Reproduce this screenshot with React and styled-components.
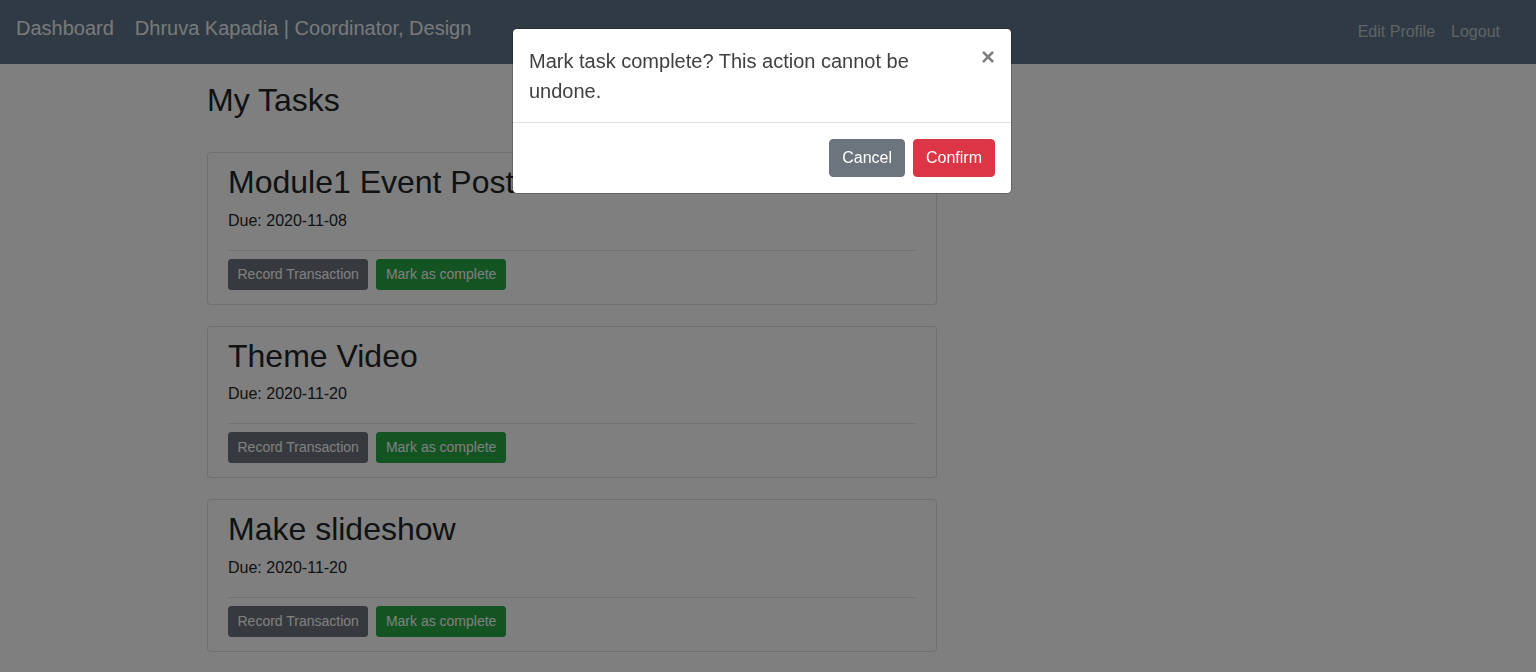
import React from 'react'
import styled, { createGlobalStyle } from 'styled-components'

const tasks = [
	{ id: 1, title: 'Module1 Event Poster', due: '2020-11-08' },
	{ id: 2, title: 'Theme Video', due: '2020-11-20' },
	{ id: 3, title: 'Make slideshow', due: '2020-11-20' },
]

const App = () => (
	<>
		<GlobalStyle />
		<Navbar>
			<Brand>Dashboard</Brand>
			<Brand>Dhruva Kapadia | Coordinator, Design</Brand>
			<NavLinks>
				<NavLink>Edit Profile</NavLink>
				<NavLink>Logout</NavLink>
			</NavLinks>
		</Navbar>
		<Main>
			<PageTitle>My Tasks</PageTitle>
			<TaskList>
				{tasks.map((task) => (
					<Card key={task.id}>
						<CardTitle>{task.title}</CardTitle>
						<Due>Due: {task.due}</Due>
						<Divider />
						<Actions>
							<SmallButton variant="secondary">Record Transaction</SmallButton>
							<SmallButton variant="success">Mark as complete</SmallButton>
						</Actions>
					</Card>
				))}
			</TaskList>
		</Main>
		<Backdrop />
		<Dialog>
			<DialogHeader>
				<DialogTitle>Mark task complete? This action cannot be undone.</DialogTitle>
				<Close aria-label="Close">×</Close>
			</DialogHeader>
			<DialogFooter>
				<Button variant="secondary">Cancel</Button>
				<Button variant="danger">Confirm</Button>
			</DialogFooter>
		</Dialog>
	</>
)

export default App

const colors = {
	secondary: '#6c757d',
	success: '#28a745',
	danger: '#dc3545',
}

const GlobalStyle = createGlobalStyle`
	* {
		box-sizing: border-box;
	}
	body {
		margin: 0;
		background: #fff;
		color: #212529;
		font-family: 'Liberation Sans', Arial, sans-serif;
		font-size: 16px;
		line-height: 1.5;
		overflow: hidden;
	}
`

const Navbar = styled.nav`
	display: flex;
	align-items: flex-start;
	gap: 21px;
	height: 64px;
	padding: 13px 36px 0 16px;
	background: #5f7588;
`

const Brand = styled.span`
	font-size: 20px;
	line-height: 30px;
	color: #f0f3f6;
`

const NavLinks = styled.div`
	display: flex;
	gap: 16px;
	margin-left: auto;
	padding-top: 7px;
`

const NavLink = styled.a`
	color: rgba(255, 255, 255, 0.6);
	font-size: 16px;
	line-height: 24px;
	cursor: pointer;
`

const Main = styled.main`
	width: 730px;
	margin-left: 207px;
	padding-top: 17px;
`

const PageTitle = styled.h2`
	margin: 0 0 33px;
	font-size: 32px;
	font-weight: 500;
	line-height: 1.2;
`

const TaskList = styled.div`
	display: flex;
	flex-direction: column;
	gap: 21px;
`

const Card = styled.div`
	border: 1px solid rgba(0, 0, 0, 0.125);
	border-radius: 4px;
	padding: 10px 20px 14px;
	background: #fff;
`

const CardTitle = styled.h2`
	margin: 0 0 7px;
	font-size: 32px;
	font-weight: 500;
	line-height: 1.2;
	white-space: nowrap;
`

const Due = styled.p`
	margin: 0 0 17px;
`

const Divider = styled.hr`
	margin: 0 0 8px;
	border: 0;
	border-top: 1px solid rgba(0, 0, 0, 0.1);
`

const Actions = styled.div`
	display: flex;
	gap: 8px;
`

const SmallButton = styled.button`
	padding: 4px 8.5px;
	border: 1px solid ${(p) => colors[p.variant]};
	border-radius: 3px;
	background: ${(p) => colors[p.variant]};
	color: #fff;
	font-family: inherit;
	font-size: 14px;
	line-height: 21px;
`

const Backdrop = styled.div`
	position: fixed;
	inset: 0;
	background: rgba(0, 0, 0, 0.5);
`

const Dialog = styled.div`
	position: fixed;
	top: 28px;
	left: 512px;
	width: 500px;
	border: 1px solid rgba(0, 0, 0, 0.2);
	border-radius: 5px;
	background: #fff;
	background-clip: padding-box;
`

const DialogHeader = styled.div`
	display: flex;
	align-items: flex-start;
	padding: 17px 16px 16px;
	border-bottom: 1px solid #dee2e6;
`

const DialogTitle = styled.h5`
	max-width: 420px;
	margin: 0;
	font-size: 20px;
	font-weight: 500;
	line-height: 1.5;
	color: #404040;
`

const Close = styled.button`
	margin: -17px -16px -16px auto;
	padding: 16px;
	border: 0;
	background: transparent;
	font-family: inherit;
	font-size: 24px;
	font-weight: 700;
	line-height: 1;
	color: #000;
	opacity: 0.5;
`

const DialogFooter = styled.div`
	display: flex;
	justify-content: flex-end;
	gap: 8px;
	padding: 16px;
`

const Button = styled.button`
	padding: 6px 12px;
	border: 1px solid ${(p) => colors[p.variant]};
	border-radius: 4px;
	background: ${(p) => colors[p.variant]};
	color: #fff;
	font-family: inherit;
	font-size: 16px;
	line-height: 24px;
`
